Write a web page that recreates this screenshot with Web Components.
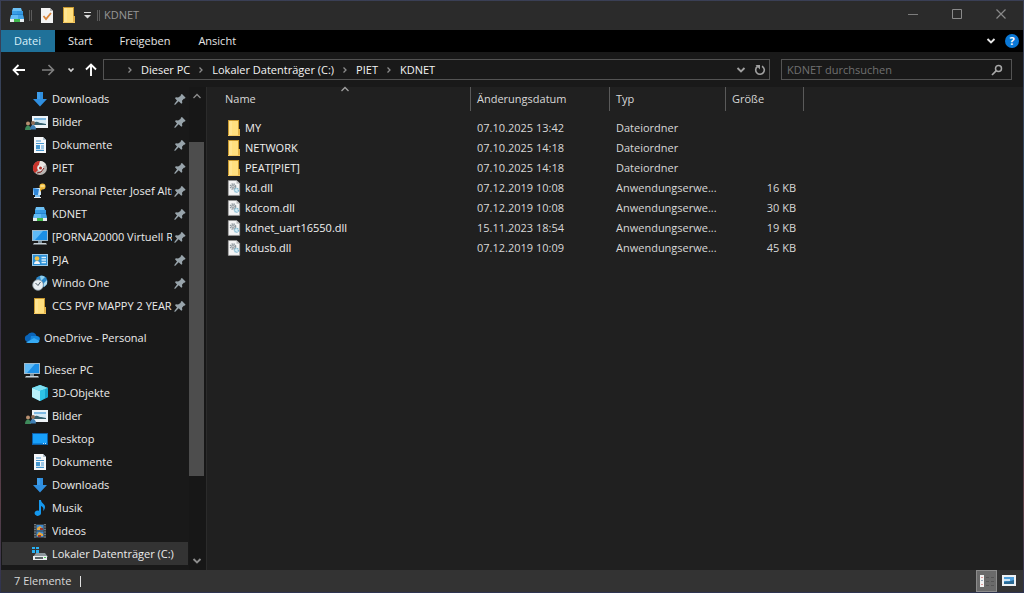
<!DOCTYPE html>
<html lang="de">
<head>
<meta charset="utf-8">
<title>KDNET</title>
<style>
  html { color-scheme: dark; }
  body { margin: 0; font: 11px/16px "Open Sans", "Noto Sans", sans-serif; color: #ececec; background: linear-gradient(#3a3f55, #33445c 30%, #3b3046 60%, #5a3f48 85%, #2d3350); }
</style>
</head>
<body>
<explorer-window>
  <title-bar slot="title" heading="KDNET"></title-bar>
  <ribbon-tabs slot="ribbon"></ribbon-tabs>
  <address-row slot="address">
    <path-crumb>Dieser PC</path-crumb>
    <path-crumb>Lokaler Datenträger (C:)</path-crumb>
    <path-crumb>PIET</path-crumb>
    <path-crumb>KDNET</path-crumb>
  </address-row>
  <nav-pane slot="nav">
    <nav-group>
      <nav-item icon="download" pinned>Downloads</nav-item>
      <nav-item icon="pictures" pinned>Bilder</nav-item>
      <nav-item icon="document" pinned>Dokumente</nav-item>
      <nav-item icon="disc" pinned>PIET</nav-item>
      <nav-item icon="persona" pinned>Personal Peter Josef Altmann</nav-item>
      <nav-item icon="netdrive" pinned>KDNET</nav-item>
      <nav-item icon="pc" pinned>[PORNA20000 Virtuell R</nav-item>
      <nav-item icon="card" pinned>PJA</nav-item>
      <nav-item icon="clock" pinned>Windo One</nav-item>
      <nav-item icon="folder" pinned>CCS PVP MAPPY 2 YEAR</nav-item>
    </nav-group>
    <nav-group>
      <nav-item icon="cloud" root>OneDrive - Personal</nav-item>
    </nav-group>
    <nav-group>
      <nav-item icon="pc" root>Dieser PC</nav-item>
      <nav-item icon="cube">3D-Objekte</nav-item>
      <nav-item icon="pictures">Bilder</nav-item>
      <nav-item icon="desktop">Desktop</nav-item>
      <nav-item icon="document">Dokumente</nav-item>
      <nav-item icon="download">Downloads</nav-item>
      <nav-item icon="music">Musik</nav-item>
      <nav-item icon="video">Videos</nav-item>
      <nav-item icon="drive" selected>Lokaler Datenträger (C:)</nav-item>
    </nav-group>
  </nav-pane>
  <file-table slot="files"></file-table>
  <status-bar slot="status">7 Elemente</status-bar>
</explorer-window>

<script>
const ICONS = {
  folder: '<path fill="#c9992f" d="M2 0h11v9h1v7H2z"/><path fill="#ffdf7e" d="M3 1h9v14H3z"/><path fill="#ffe9a3" d="M3 1h3v14H3z" opacity=".5"/><path fill="#e3b34a" d="M12 9h2v6h-2z"/><path fill="#f5ca62" d="M2 15h12v1H2z"/>',
  dll: '<path fill="#f4f4f4" stroke="#9a9a9a" stroke-width=".6" d="M2.3.5h8.5L13.7 3.400v12H2.300z"/><path fill="#b9b9b9" d="M10.500.500l3.200 3.200h-3.200z"/><circle cx="7" cy="6.500" r="2.500" fill="none" stroke="#8d969c" stroke-width="1.600" stroke-dasharray="1.300 .7"/><circle cx="7" cy="6.500" r="1.400" fill="#c9ced1" stroke="#7d858a" stroke-width=".6"/><circle cx="10.500" cy="10.300" r="2" fill="#d5edf6" stroke="#81b8cf" stroke-width="1.400" stroke-dasharray="1.200 .6"/>',
  download: '<path fill="#2f8fe0" d="M5 1h6v7h4L8 15.500 1 8h4z"/><path fill="#4aa7ef" d="M5 1h3v7H5z" opacity=".6"/>',
  pictures: '<path fill="#eef3f7" d="M0 2h16v12H0z"/><path fill="#7fb9e2" d="M2 4h12v4H2z"/><path fill="#d5e9f5" d="M2 6h12v4H2z"/><path fill="#35606e" d="M2 9c3-3 5 0 7 0s3 1 5 1v1H2z"/><circle cx="-4" cy="9.500" r="2" fill="#b98f70"/><path fill="#3f8a5b" d="M-7 16c0-6 6-6 6 0z"/><circle cx="1" cy="9" r="2" fill="#8b6b56"/><path fill="#3f7fb5" d="M-2 15.500c0-6 6-6 6 0z"/>',
  document: '<path fill="#f6f8fa" d="M2 0h9l3 3v13H2z"/><path fill="#b5c4d0" d="M11 0l3 3h-3z"/><path stroke="#4596cf" stroke-width="1.200" d="M4 4h5M4 6.500h8M9 9h3M9 11h3M4 13.300h8"/><path fill="#4596cf" d="M4 8h4v4H4z"/>',
  disc: '<circle cx="8" cy="8" r="7" fill="#b9b5b2"/><path fill="#c9342c" d="M8 1a7 7 0 0 0-5 12l3-3a3 3 0 0 1 1-5z"/><path fill="#e9e5e2" d="M8 1a7 7 0 0 1 6 4l-4 2-3-2z"/><circle cx="8.500" cy="8" r="3" fill="#f0ecea"/><circle cx="8.500" cy="8" r="1.500" fill="#b3332c"/><path stroke="#7b2320" d="M5 13l4-1 3-4" fill="none"/>',
  persona: '<path fill="#cfe8fa" d="M1 5h8v7H1z"/><path fill="#2e86d8" d="M1 5l6 1-1 6H2z"/><path fill="#7fc0f0" d="M3 12h5v3H3z"/><path fill="#eef3f7" d="M2 14h7v1H2z"/><circle cx="10.500" cy="3.500" r="3" fill="#f3bf3e"/><path fill="#f9dc86" d="M8.500 2h4v2h-4z"/><path fill="#e8a92c" d="M8 6l3-1-3 4z"/>',
  netdrive: '<path fill="#6cc0f5" d="M4 1h8l1 3H3z"/><path fill="#3a9fe6" d="M3 4h11v4H3z"/><path fill="#2484cf" d="M3 7h11v1H3z"/><path fill="#62bcf5" d="M2 8h12l1 4H1z"/><path fill="#3095e0" d="M8 4h6v3H8zM9 8h5l1 4H9z" opacity=".6"/><path fill="#e6ecef" d="M1 12h14v3H1z"/><path fill="#3fb74c" d="M5 12h6v3H5z"/>',
  pc: '<path fill="#9fb9ca" d="M0 1h16v11H0z"/><path fill="#1c8fe6" d="M1 2h14v9H1z"/><path fill="#5fbaf6" d="M1 2h10L3 11H1z"/><path fill="#7b8f9c" d="M6 12h4v2H6z"/><path fill="#c7d1d8" d="M2 14h12l1 1.500H1z"/>',
  card: '<path fill="#9cc9e6" d="M0 2h16v12H0z"/><path fill="#2b8fd6" d="M1 3h14v10H1z"/><circle cx="5" cy="6.500" r="2.300" fill="#f2c14a"/><path fill="#f4f7f9" d="M2 12c0-4 6-4 6 0z"/><path stroke="#d7effc" stroke-width="1.300" d="M9.500 5.500H14M9.500 8H14M9.500 10.500H14"/>',
  clock: '<circle cx="9.500" cy="6.500" r="6" fill="#2a86c8"/><path fill="#8fd0f0" d="M8 1a6 6 0 0 1 5 1l-4 4z"/><path fill="#b4dcec" d="M12 8l3-3v4l-3 3z"/><circle cx="6" cy="10" r="5.300" fill="#e7edf1" stroke="#8fa0aa" stroke-width=".8"/><path d="M3.500 8L6 10.500 8.500 7" stroke="#4b5a64" fill="none"/>',
  cloud: '<path fill="#0a64b8" d="M4 12a3.600 3.600 0 0 1-.6-7A5 5 0 0 1 12.500 6z"/><path fill="#1587dd" d="M6 12l1-6 6 0a3 3 0 0 1 2.500 4.500L13 12z"/><path fill="#37abf5" d="M2 12.500L10 8l5.500 3a2.500 2.500 0 0 1-2 2H4z"/>',
  cube: '<path fill="#35c3e6" d="M0 3l8-3 8 3v9l-8 4-8-4z"/><path fill="#b9f0fa" d="M0 3l8 3v10l-8-4z"/><path fill="#7fdff2" d="M0 3l8-3 8 3-8 3z"/><path fill="#17a3cc" d="M8 6l8-3v9l-8 4z"/><path fill="#3bd0ee" d="M8 6l5-2v9l-5 3z" opacity=".7"/>',
  desktop: '<path fill="#0d5fa8" d="M0 2h16v12H0z"/><path fill="#18a0fb" d="M1 3h14v9H1z"/><path fill="#0f82d8" d="M1 12h14v1H1z"/><path fill="#bfe5fd" d="M11 12h1v1h-1zM13 12h1v1h-1z"/>',
  music: '<path fill="#1598ee" d="M7 0h2c0 3 4 4 4 7 0 2-1 3-2 4 1-3 0-4-2-5v7a3.200 2.700 0 1 1-2-2.300z"/>',
  video: '<path fill="#3d4347" d="M2 1h12v14H2z"/><path stroke="#a7afb4" stroke-dasharray="1 1.500" d="M3 1v14M13 1v14"/><path fill="#3f8ad0" d="M4.500 2h7v5.500h-7zM4.500 8.500h7V14h-7z"/><path fill="#e3a53d" d="M5 5l3-2 2 2 1 2H5zM5 12l2-3 4 2v2H5z"/><path fill="#9a382c" d="M8 5h3v2H8zM6 12h3v2H6z"/>',
  drive: '<path fill="#8e989d" d="M4 7h9l3 4H1z"/><path fill="#29b0f2" d="M0 1h3v2H0zM4 1h3v2H4zM0 4h3v3H0zM4 4h3v3H4z"/><path fill="#e9edef" d="M1 10h14v4H1z"/><path fill="#5a6367" d="M3 11h8v2H3z"/><path fill="#4fd05c" d="M12 11h2v1h-2z"/>',
  check: '<path fill="#f3f3f3" d="M2 1h9l3 3v12H2z"/><path fill="#b5b5b5" d="M11 1l3 3h-3z"/><path fill="none" stroke="#d9853b" stroke-width="1.800" d="M4.500 9l2.500 3 5-6"/>',
  pin: '<path fill="#98a4ab" d="M9 3.500L10 3l3.500 3.500-.5 1-1.200.2-1.800 2 .3 2.300-1 .8-2.600-2.500L3 14l-.8-.8L5 9.500 3 7.200l.8-1 2.300.2L8.500 5z"/>',
  back: '<path fill="none" stroke="#fff" stroke-width="1.800" d="M14 8H3M7.500 3L2.500 8l5 5"/>',
  forward: '<path fill="none" stroke="#808080" stroke-width="1.600" d="M2 8h11M8.500 3l5 5-5 5"/>',
  up: '<path fill="none" stroke="#fff" stroke-width="1.900" d="M8 14V3M3 7.500l5-5 5 5"/>',
  down: '<path fill="none" stroke="currentColor" stroke-width="1.900" d="M4.500 6L8 9.500 11.500 6"/>',
  smalldown: '<path fill="none" stroke="#d0d0d0" stroke-width="1.700" d="M5.500 6.500L8 9l2.500-2.500"/>',
  chevup: '<path fill="none" stroke="currentColor" stroke-width="1.300" d="M4.500 10L8 6.500l3.500 3.500"/>',
  crumb: '<path fill="none" stroke="#8c8c8c" stroke-width="1.300" d="M6.500 5.500L9 8l-2.500 2.500"/>',
  refresh: '<path fill="none" stroke="#a0a0a0" stroke-width="1.600" d="M10 4.200a4.300 4.300 0 1 1-4.500.3"/><path fill="#a0a0a0" d="M3.500 3h4.500v4.500z"/>',
  search: '<circle cx="9.500" cy="6.500" r="3" fill="none" stroke="#a8a8a8" stroke-width="1.500"/><path stroke="#a8a8a8" stroke-width="1.700" d="M7.300 8.700L3 13"/>',
  custom: '<path fill="#d8d8d8" d="M5 5h7v1H5zM5 8h7l-3.500 3.500z"/>',
  min: '<path stroke="#7d7d7d" d="M3 7.500h10"/>',
  max: '<path fill="none" stroke="#8a8a8a" d="M3.500 2.500h9v9h-9z"/>',
  close: '<path stroke="#8a8a8a" stroke-width="1.200" d="M3.500 2.500l9 9M12.500 2.500l-9 9"/>',
  details: '<path fill="#f2f2f2" d="M1 2h4v12H1z"/><path fill="#d99" d="M2 4h2v1H2zM2 11h2v1H2z"/><path fill="#9ab" d="M2 7h2v1H2z"/><path stroke="#555" d="M7 4.500h3M12 4.500h3M7 8.500h3M12 8.500h3M7 12.500h3M12 12.500h3"/>',
  thumbs: '<path fill="#eef2f5" d="M1 2h14v11H1z"/><path fill="#4f9fdc" d="M3 4h10v7H3z"/><path fill="#cfe6f5" d="M3 6h6v2H3z"/><path fill="#2b6a94" d="M3 11V9c3-1 5 0 10-2v4z"/>'
};

const RESET = `
  button { appearance: none; margin: 0; padding: 0; border: 0; background: none; color: inherit; font: inherit; display: flex; align-items: center; justify-content: center; }
  a { color: inherit; text-decoration: none; }
`;

function define(name, render) {
  customElements.define(name, class extends HTMLElement {
    connectedCallback() {
      if (this.shadowRoot) return;
      this.attachShadow({ mode: "open" }).innerHTML = render(this);
    }
  });
}
const icon = name => `<ui-icon name="${name}"></ui-icon>`;

define("ui-icon", el => `
  <style>:host { display: block; flex: none; width: 16px; height: 16px; } svg { display: block; overflow: visible; }</style>
  <svg width="16" height="16" viewBox="0 0 16 16" aria-hidden="true">${ICONS[el.getAttribute("name")]}</svg>`);

define("explorer-window", () => `
  <style>
    :host { display: flex; flex-direction: column; box-sizing: border-box; min-height: 100vh; padding: 1px; }
    main { flex: 1; display: grid; grid-template-columns: 206px minmax(0, 1fr); background: #202020; }
  </style>
  <slot name="title"></slot><slot name="ribbon"></slot><slot name="address"></slot>
  <main><slot name="nav"></slot><slot name="files"></slot></main>
  <slot name="status"></slot>`);

define("title-bar", el => `
  <style>${RESET}
    :host { display: flex; align-items: center; height: 28px; padding: 0 0 1px 8px; background: #2b2b2b; color: #969696; }
    i { width: 1px; height: 11px; border: 1px solid #5c5c5c; border-width: 0 1px; margin: 0 4px; }
    .tool { width: 22px; height: 22px; }
    .caret { width: 13px; }
    .win { width: 44px; height: 28px; }
    h1 { flex: 1; margin: 0; font: inherit; }
  </style>
  ${icon("netdrive")}<i></i>
  <button class="tool" aria-label="Eigenschaften">${icon("check")}</button>
  <button class="tool" aria-label="Neuer Ordner">${icon("folder")}</button>
  <button class="caret" aria-label="Anpassen">${icon("custom")}</button><i></i>
  <h1>${el.getAttribute("heading")}</h1>
  <button class="win" aria-label="Minimieren">${icon("min")}</button>
  <button class="win" aria-label="Maximieren">${icon("max")}</button>
  <button class="win" aria-label="Schließen">${icon("close")}</button>`);

define("ribbon-tabs", () => `
  <style>${RESET}
    :host { display: flex; align-items: center; height: 22px; background: #000; color: #e6e6e6; }
    nav { display: flex; flex: 1; }
    nav button { height: 22px; padding: 0 13px; }
    nav .file { padding: 0 14px 0 13px; background: #1f7199; color: #d8f0fa; }
    nav button + button + button { padding: 0 14px; }
    .help { width: 14px; height: 14px; margin: 0 4px 0 6px; border-radius: 50%; background: #0a78d6; color: #fff; font-weight: 700; }
  </style>
  <nav><button class="file">Datei</button><button>Start</button><button>Freigeben</button><button>Ansicht</button></nav>
  <button aria-label="Menüband erweitern">${icon("down")}</button>
  <button class="help" aria-label="Hilfe">?</button>`);

define("path-crumb", () => `
  <style>${RESET} :host { display: flex; align-items: center; gap: 3px; white-space: nowrap; } a { padding-right: 3px; }</style>
  ${icon("crumb")}<a href="#"><slot></slot></a>`);

define("address-row", () => `
  <style>${RESET}
    :host { display: flex; align-items: center; height: 35px; padding: 0 11px 0 10px; background: #191919; color: #f4f4f4; }
    .go { display: flex; align-items: center; width: 92px; }
    .go button { width: 16px; }
    .go .fwd { margin: 0 7px 0 13px; }
    .go .up { margin-left: 4px; }
    .box { display: flex; align-items: center; box-sizing: border-box; height: 21px; border: 1px solid #535353; }
    .path { flex: 1; min-width: 0; margin-right: 11px; padding-left: 18px; }
    .crumbs { display: flex; flex: 1; min-width: 0; overflow: hidden; }
    .path button { width: 19px; color: #a0a0a0; }
    .find { width: 231px; padding: 0 6px 0 5px; }
    input { flex: 1; min-width: 0; height: 19px; padding: 0; border: 0; outline: 0; background: none; color: inherit; font: inherit; }
    input::placeholder { color: #707070; }
  </style>
  <div class="go">
    <button aria-label="Zurück">${icon("back")}</button>
    <button class="fwd" aria-label="Vorwärts">${icon("forward")}</button>
    <button aria-label="Verlauf">${icon("smalldown")}</button>
    <button class="up" aria-label="Nach oben">${icon("up")}</button>
  </div>
  <div class="box path"><div class="crumbs"><slot></slot></div>
    <button aria-label="Vorherige Orte">${icon("down")}</button>
    <button aria-label="Aktualisieren">${icon("refresh")}</button>
  </div>
  <div class="box find"><input type="search" aria-label="KDNET durchsuchen" placeholder="KDNET durchsuchen">
    <button aria-label="Suchen">${icon("search")}</button></div>`);

define("nav-item", el => `
  <style>${RESET}
    :host { display: block; padding: 0 1px; }
    a { display: flex; align-items: center; height: 23px; padding-left: 30px; }
    :host([root]) a { padding-left: 22px; }
    :host([selected]) a { background: #333; }
    span { flex: 1; min-width: 0; margin-left: 4px; overflow: hidden; white-space: nowrap; }
  </style>
  <a href="#">${icon(el.getAttribute("icon"))}<span><slot></slot></span>${el.hasAttribute("pinned") ? icon("pin") : ""}</a>`);

define("nav-group", () => `<style>:host { display: block; }</style><slot></slot>`);

define("nav-pane", () => `
  <style>${RESET}
    :host { display: grid; grid-template-columns: minmax(0, 1fr) 17px; background: #191919; border-right: 1px solid #2b2b2b; }
    nav { display: flex; flex-direction: column; gap: 9px; }
    .bar { display: flex; flex-direction: column; background: #171717; color: #8c8c8c; }
    .bar button { width: 15px; height: 18px; }
    .track { flex: 1; display: grid; grid-template-rows: 37fr 335fr 76fr; }
    .thumb { grid-row: 2; margin-right: 2px; background: #4d4d4d; }
  </style>
  <nav><slot></slot></nav>
  <div class="bar"><button aria-label="Nach oben blättern">${icon("chevup")}</button>
    <div class="track"><div class="thumb"></div></div>
    <button aria-label="Nach unten blättern">${icon("down")}</button></div>`);

const FILES = [
  ["folder", "MY", "07.10.2025 13:42", "Dateiordner", ""],
  ["folder", "NETWORK", "07.10.2025 14:18", "Dateiordner", ""],
  ["folder", "PEAT[PIET]", "07.10.2025 14:18", "Dateiordner", ""],
  ["dll", "kd.dll", "07.12.2019 10:08", "Anwendungserwe...", "16 KB"],
  ["dll", "kdcom.dll", "07.12.2019 10:08", "Anwendungserwe...", "30 KB"],
  ["dll", "kdnet_uart16550.dll", "15.11.2023 18:54", "Anwendungserwe...", "19 KB"],
  ["dll", "kdusb.dll", "07.12.2019 10:09", "Anwendungserwe...", "45 KB"]
];

define("file-table", () => `
  <style>${RESET}
    :host { display: block; padding-left: 12px; }
    table { table-layout: fixed; width: 585px; border-collapse: separate; border-spacing: 0; color: #d8d8d8; }
    .name { width: 252px; } .date { width: 139px; } .type { width: 116px; }
    th { position: relative; height: 24px; padding: 0; border-right: 1px solid #5a5a5a; box-sizing: border-box; font-weight: 400; }
    th button { width: 100%; height: 24px; padding-left: 6px; justify-content: flex-start; }
    th ui-icon { position: absolute; top: -6px; left: calc(50% - 8px); color: #a0a0a0; }
    tbody::before { content: ""; display: block; height: 7px; }
    td { height: 20px; padding: 0 0 0 6px; white-space: nowrap; }
    td:first-child { padding-left: 7px; color: #f0f0f0; }
    td div { display: flex; align-items: center; gap: 3px; }
    td:last-child { padding-right: 8px; text-align: right; }
  </style>
  <table>
    <thead><tr>
      <th class="name"><button>Name</button>${icon("chevup")}</th>
      <th class="date"><button>Änderungsdatum</button></th>
      <th class="type"><button>Typ</button></th>
      <th><button>Größe</button></th>
    </tr></thead>
    <tbody>${FILES.map(([kind, name, date, type, size]) =>
      `<tr><td><div>${icon(kind)}<span>${name}</span></div></td><td>${date}</td><td>${type}</td><td>${size}</td></tr>`).join("")}
    </tbody>
  </table>`);

define("status-bar", () => `
  <style>${RESET}
    :host { display: flex; align-items: center; height: 22px; padding: 0 2px 0 13px; background: #333; color: #d8d8d8; }
    p { flex: 1; margin: 0; display: flex; align-items: center; gap: 9px; }
    p::after { content: ""; width: 1px; height: 11px; background: #e0e0e0; }
    button { width: 24px; height: 22px; }
    button.on { width: 21px; box-sizing: border-box; border: 1px solid #8c8c8c; background: #6a6a6a; }
  </style>
  <p><slot></slot></p>
  <button class="on" aria-label="Details">${icon("details")}</button>
  <button aria-label="Große Symbole">${icon("thumbs")}</button>`);
</script>
</body>
</html>
